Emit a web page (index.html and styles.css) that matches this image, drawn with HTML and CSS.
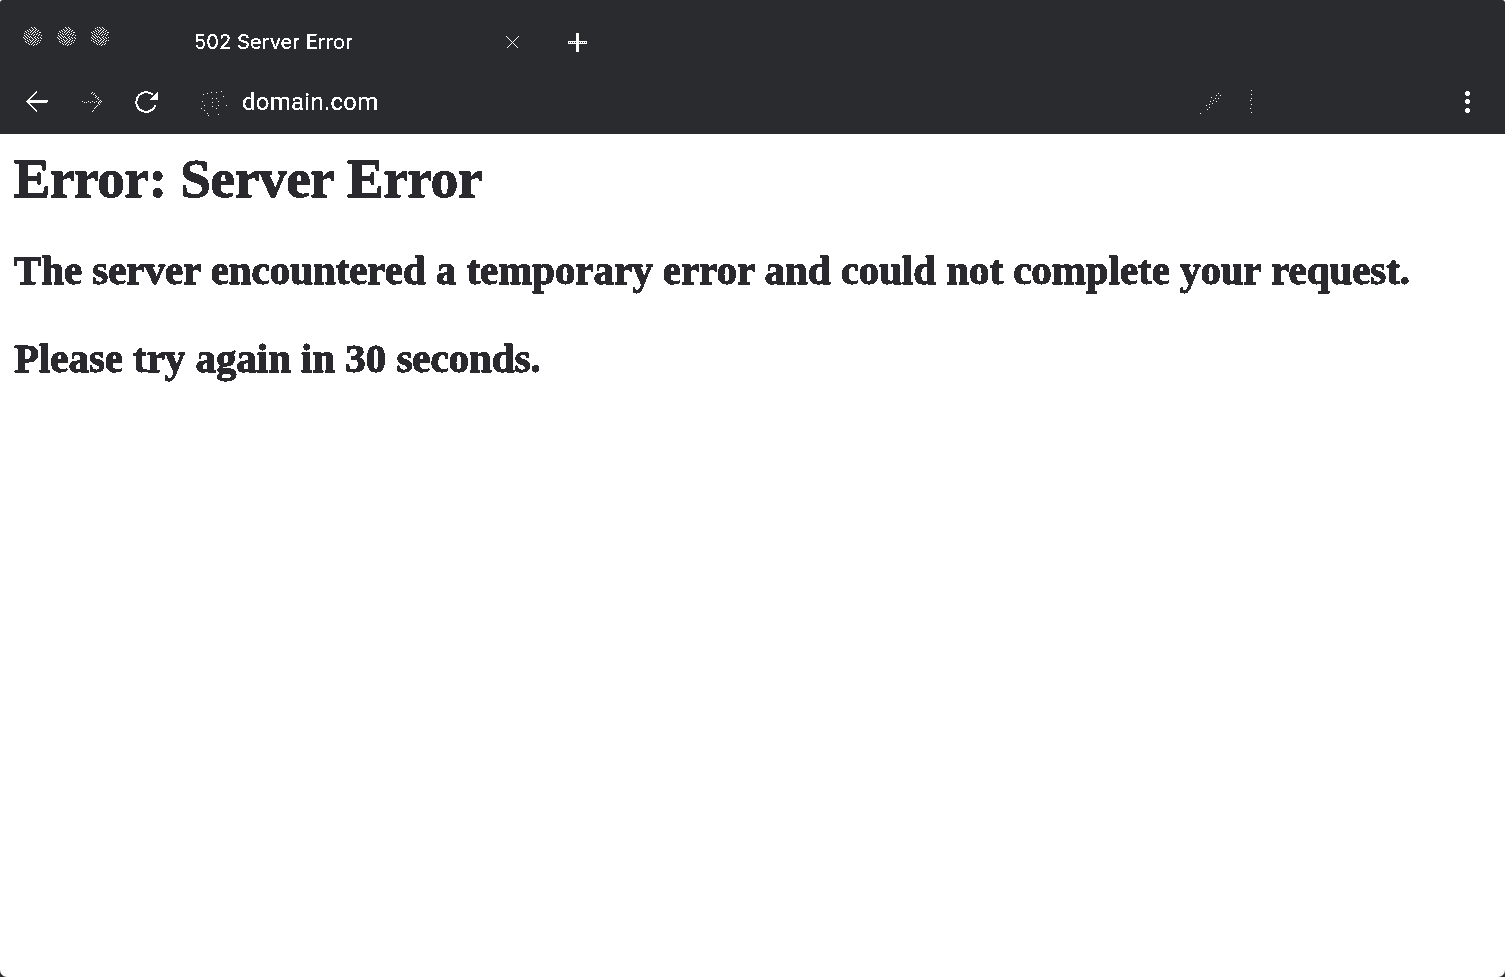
FILE: index.html
```
<!DOCTYPE html>
<html lang="en">
<head>
<meta charset="utf-8">
<title>502 Server Error</title>
<link rel="stylesheet" href="styles.css">
</head>
<body>
<svg class="defs" width="0" height="0" aria-hidden="true">
  <filter id="crisp" x="0" y="0" width="100%" height="100%"><feComponentTransfer><feFuncA type="discrete" tableValues="0 0 1 1 1"/></feComponentTransfer></filter>
  <pattern id="stipple" width="17" height="10" patternUnits="userSpaceOnUse">
    <path stroke="#fff" d="M0 .5h1M3 .5h1M6 .5h1M8 .5h1M11 .5h1M14 .5h1M1 1.5h1M4 1.5h1M9 1.5h1M12 1.5h1M15 1.5h1M2 2.5h1M6 2.5h1M10 2.5h1M13 2.5h1M0 3.5h1M4 3.5h1M7 3.5h1M9 3.5h1M12 3.5h1M15 3.5h1M2 4.5h1M5 4.5h1M8 4.5h1M11 4.5h1M14 4.5h1M0 5.5h1M3 5.5h1M7 5.5h1M10 5.5h1M12 5.5h1M16 5.5h1M1 6.5h1M5 6.5h1M9 6.5h1M14 6.5h1M3 7.5h1M6 7.5h1M8 7.5h1M11 7.5h1M13 7.5h1M16 7.5h1M1 8.5h1M4 8.5h1M10 8.5h1M15 8.5h1M2 9.5h1M5 9.5h1M7 9.5h1M12 9.5h1"/>
  </pattern>
</svg>
<div class="window">
  <header class="chrome">
    <div class="tabs">
      <svg class="lights" width="90" height="20" shape-rendering="crispEdges"><g fill="url(#stipple)"><circle cx="9.5" cy="9.5" r="9.5"/><circle cx="43.5" cy="9.5" r="9.5"/><circle cx="77" cy="9.5" r="9.5"/></g></svg>
      <div class="tab">
        <span class="tab-title">502 Server Error</span>
        <svg class="close" width="15" height="15" shape-rendering="crispEdges"><path stroke="#fff" stroke-width="1.4" d="M1.5 1.5l12 12M13.5 1.5l-12 12"/></svg>
      </div>
      <svg class="plus" width="20" height="20" shape-rendering="crispEdges"><path fill="#fff" d="M8 0h3v19H8zM0 8h19v3H0z"/><path stroke="#2a2b2e" stroke-dasharray="1 1" d="M1 9.5h7M11 9.5h8"/></svg>
    </div>
    <div class="toolbar">
      <svg width="24" height="24" shape-rendering="crispEdges"><path fill="none" stroke="#fff" stroke-width="2" d="M22 11H1M11 1.5l-10 10 10 10"/><path stroke="#fff" d="M2 12.5h19"/></svg>
      <svg class="forward" width="24" height="24" shape-rendering="crispEdges"><path stroke="#fff" d="M1 11.5h1M3 12.5h1M5 12.5h1M7 11.5h1M9 12.5h1M11 11.5h1M13 12.5h1M15 11.5h1M17 12.5h1M19 12.5h1M20 11.5h1M10 3.5h1M11 2.5h1M12 4.5h1M13 3.5h1M14 5.5h1M14 7.5h1M15 6.5h1M16 8.5h1M17 7.5h1M17 9.5h1M19 10.5h1M18 14.5h1M17 13.5h1M16 15.5h1M15 16.5h1M14 17.5h1M13 18.5h1M12 20.5h1M11 21.5h1M18 11.5h1"/></svg>
      <svg class="reload" width="24" height="24" shape-rendering="crispEdges"><path fill="none" stroke="#fff" stroke-width="2" d="M20.5 15A9.8 9.8 0 1 1 18 5"/><path fill="#fff" d="M23 1v9h-8v-1z"/></svg>
      <svg class="globe" width="30" height="26" shape-rendering="crispEdges"><path stroke="#fff" d="M3 4.5h1M7 3.5h1M11 2.5h1M16 2.5h1M21 1.5h1M23 6.5h1M26 15.5h1M18 11.5h1M18 24.5h1M16 18.5h1M12 16.5h1M12 12.5h1M12 8.5h1M16 8.5h1M4 15.5h1M2 11.5h1M1 18.5h1M4 20.5h1M7 23.5h1M8 25.5h1M18 15.5h1"/></svg>
      <span class="url">domain.com</span>
      <svg class="edit" width="54" height="26" shape-rendering="crispEdges"><path stroke="#fff" d="M18 3.5h1M20 5.5h1M16 5.5h1M11 7.5h1M15 8.5h1M18 8.5h1M13 10.5h1M10 11.5h1M16 11.5h1M12 13.5h1M9 14.5h1M6 15.5h1M9 17.5h1M7 19.5h1M0 23.5h1M51 .5h1M51 4.5h1M51 8.5h1M50 10.5h1M51 14.5h1M50 18.5h1M51 22.5h1"/></svg>
      <svg class="menu" width="6" height="24" shape-rendering="crispEdges"><path fill="#fff" d="M1 1h3v1h1v3h-1v1h-3v-1h-1v-3h1zM1 9h3v1h1v3h-1v1h-3v-1h-1v-3h1zM1 18h3v1h1v3h-1v1h-3v-1h-1v-3h1z"/></svg>
    </div>
  </header>
  <main class="page">
    <h1>Error: Server Error</h1>
    <h2 class="message">The server encountered a temporary error and could not complete your request.</h2>
    <h2 class="retry">Please try again in 30 seconds.</h2>
  </main>
</div>
</body>
</html>
```
FILE: styles.css
```
* { box-sizing: border-box; }
body { margin: 0; background: linear-gradient(#fff 0 50%, #2a2b2e 50%); }
svg { display: block; flex: none; }
.defs { position: absolute; }
.window { height: 977px; border-radius: 3px 3px 7px 7px; overflow: hidden; background: #fff; }
.chrome { height: 134px; background: #2a2b2e; color: #fff; }
.tabs { height: 84px; display: flex; align-items: center; padding-left: 23px; }
.lights { margin: -11px 81px 0 0; }
.tab { width: 326px; display: flex; align-items: center; justify-content: space-between; }
.tab-title { font: 20px/28px Inter, sans-serif; letter-spacing: .1px; white-space: nowrap; filter: url(#crisp); }
.close { margin-top: 1px; }
.plus { margin-left: 48px; margin-top: 2px; }
.toolbar { height: 36px; display: flex; align-items: center; padding: 0 34px 0 26px; }
.forward { margin-left: 31px; }
.reload { margin-left: 30px; }
.globe { margin-left: 41px; margin-top: 1px; }
.url { margin-left: 12px; font: 24px/32px Roboto, sans-serif; letter-spacing: .25px; white-space: nowrap; filter: url(#crisp); }
.edit { margin: 2px 0 0 auto; }
.menu { margin-left: 211px; }
.page { padding: 15px 14px; color: #2a2b2e; font-family: "Liberation Serif", serif; }
h1, h2 { margin: 0; white-space: nowrap; filter: url(#crisp); width: max-content; -webkit-text-stroke: .9px #2a2b2e; }
h1 { font-size: 55px; line-height: 60px; letter-spacing: -.25px; margin-left: -.5px; }
h2 { font-size: 41px; line-height: 48px; letter-spacing: -.06px; }
.message { margin-top: 37px; }
.retry { margin-top: 40px; }
```
